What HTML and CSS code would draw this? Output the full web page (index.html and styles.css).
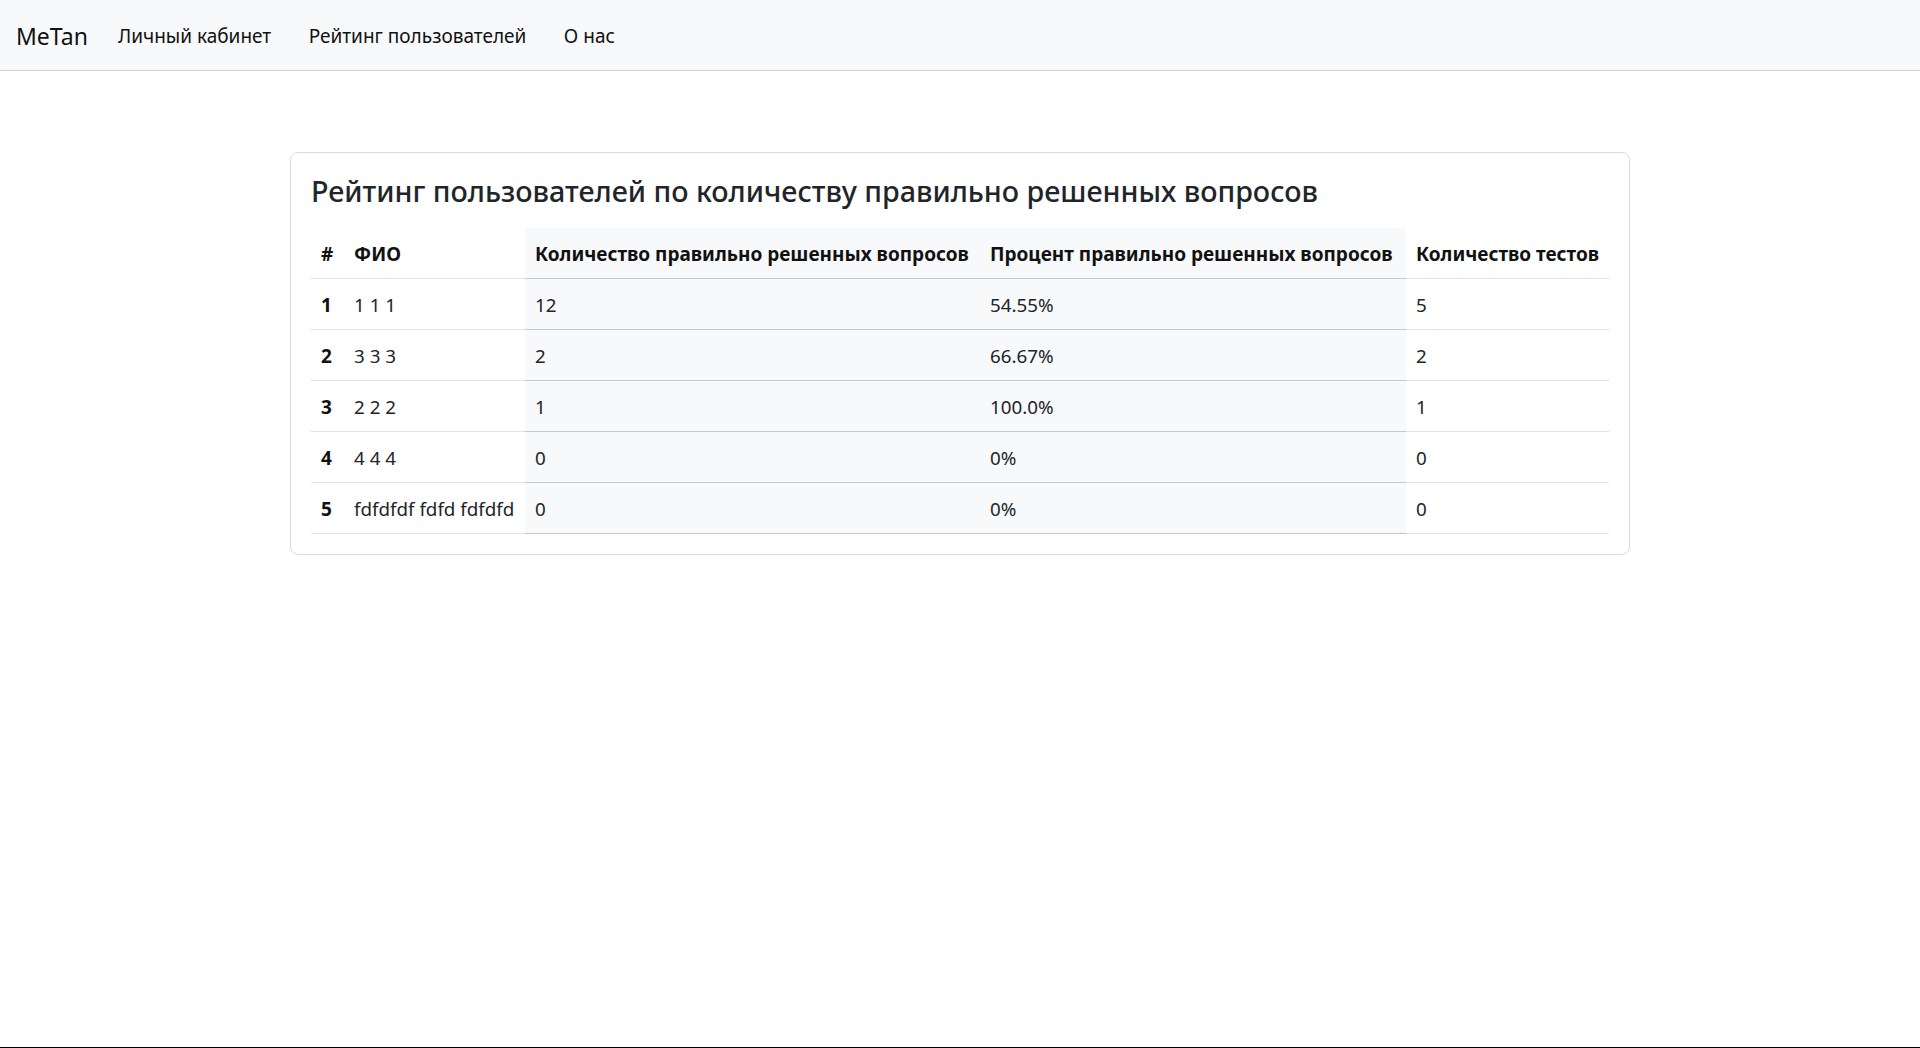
FILE: index.html
```html
<!DOCTYPE html>
<html lang="ru">
<head>
<meta charset="utf-8">
<title>Рейтинг пользователей</title>
<link rel="stylesheet" href="styles.css">
</head>
<body>
<nav class="navbar">
  <a class="brand" href="#">MeTan</a>
  <ul class="nav-links">
    <li><a href="#">Личный кабинет</a></li>
    <li><a href="#">Рейтинг пользователей</a></li>
    <li><a href="#">О нас</a></li>
  </ul>
</nav>
<main class="page">
  <section class="card">
    <h3 class="card-title">Рейтинг пользователей по количеству правильно решенных вопросов</h3>
    <table class="rating">
      <colgroup>
        <col class="c-num"><col class="c-name"><col class="c-count"><col class="c-pct"><col class="c-tests">
      </colgroup>
      <thead>
        <tr><th>#</th><th>ФИО</th><th class="light">Количество правильно решенных вопросов</th><th class="light">Процент правильно решенных вопросов</th><th>Количество тестов</th></tr>
      </thead>
      <tbody>
        <tr><th>1</th><td>1 1 1</td><td class="light">12</td><td class="light">54.55%</td><td>5</td></tr>
        <tr><th>2</th><td>3 3 3</td><td class="light">2</td><td class="light">66.67%</td><td>2</td></tr>
        <tr><th>3</th><td>2 2 2</td><td class="light">1</td><td class="light">100.0%</td><td>1</td></tr>
        <tr><th>4</th><td>4 4 4</td><td class="light">0</td><td class="light">0%</td><td>0</td></tr>
        <tr><th>5</th><td>fdfdfdf fdfd fdfdfd</td><td class="light">0</td><td class="light">0%</td><td>0</td></tr>
      </tbody>
    </table>
  </section>
</main>
<div class="screen-edge"></div>
</body>
</html>
```
FILE: styles.css
```css
* { box-sizing: border-box; }
html, body { margin: 0; padding: 0; }
body {
  font-family: "Noto Sans", "Open Sans", sans-serif;
  font-size: 18.8px;
  color: #212529;
  background: #fff;
}
a { text-decoration: none; color: inherit; }

.navbar {
  height: 71px;
  background: #f8f9fa;
  border-bottom: 1px solid #d2d3d4;
  display: flex;
  align-items: center;
  padding: 2px 16px 0;
}
.brand {
  font-size: 23px;
  color: #111;
  margin-right: 30px;
  line-height: 30px;
}
.nav-links {
  list-style: none;
  margin: 0;
  padding: 0;
  display: flex;
  gap: 37.5px;
}
.nav-links a {
  font-size: 19px;
  color: #111;
  line-height: 30px;
}

.page { padding-top: 81px; }

.card {
  width: 1340px;
  margin: 0 auto;
  border: 1px solid #dcdcdc;
  border-radius: 8px;
  padding: 20px;
}
.card-title {
  margin: 1px 0 20px;
  font-size: 28.7px;
  font-weight: 500;
  line-height: 34px;
  color: #212529;
}

.rating {
  width: 100%;
  border-collapse: collapse;
  table-layout: fixed;
}
.c-num { width: 33px; }
.c-name { width: 181px; }
.c-count { width: 455px; }
.c-pct { width: 426px; }
.c-tests { width: 203px; }

.rating th, .rating td {
  padding: 11px 10px 9px;
  line-height: 30px;
  text-align: left;
  border-bottom: 1px solid #dee2e6;
  white-space: nowrap;
  vertical-align: middle;
}
.rating th { font-weight: 700; color: #111; font-size: 19px; }
.rating td { font-weight: 400; font-size: 18.8px; }
.rating .light {
  background: #f8f9fa;
  border-bottom-color: #c6c7c8;
}

.screen-edge {
  position: fixed;
  left: 0;
  right: 0;
  bottom: 0;
  height: 1px;
  background: #000;
}
```
